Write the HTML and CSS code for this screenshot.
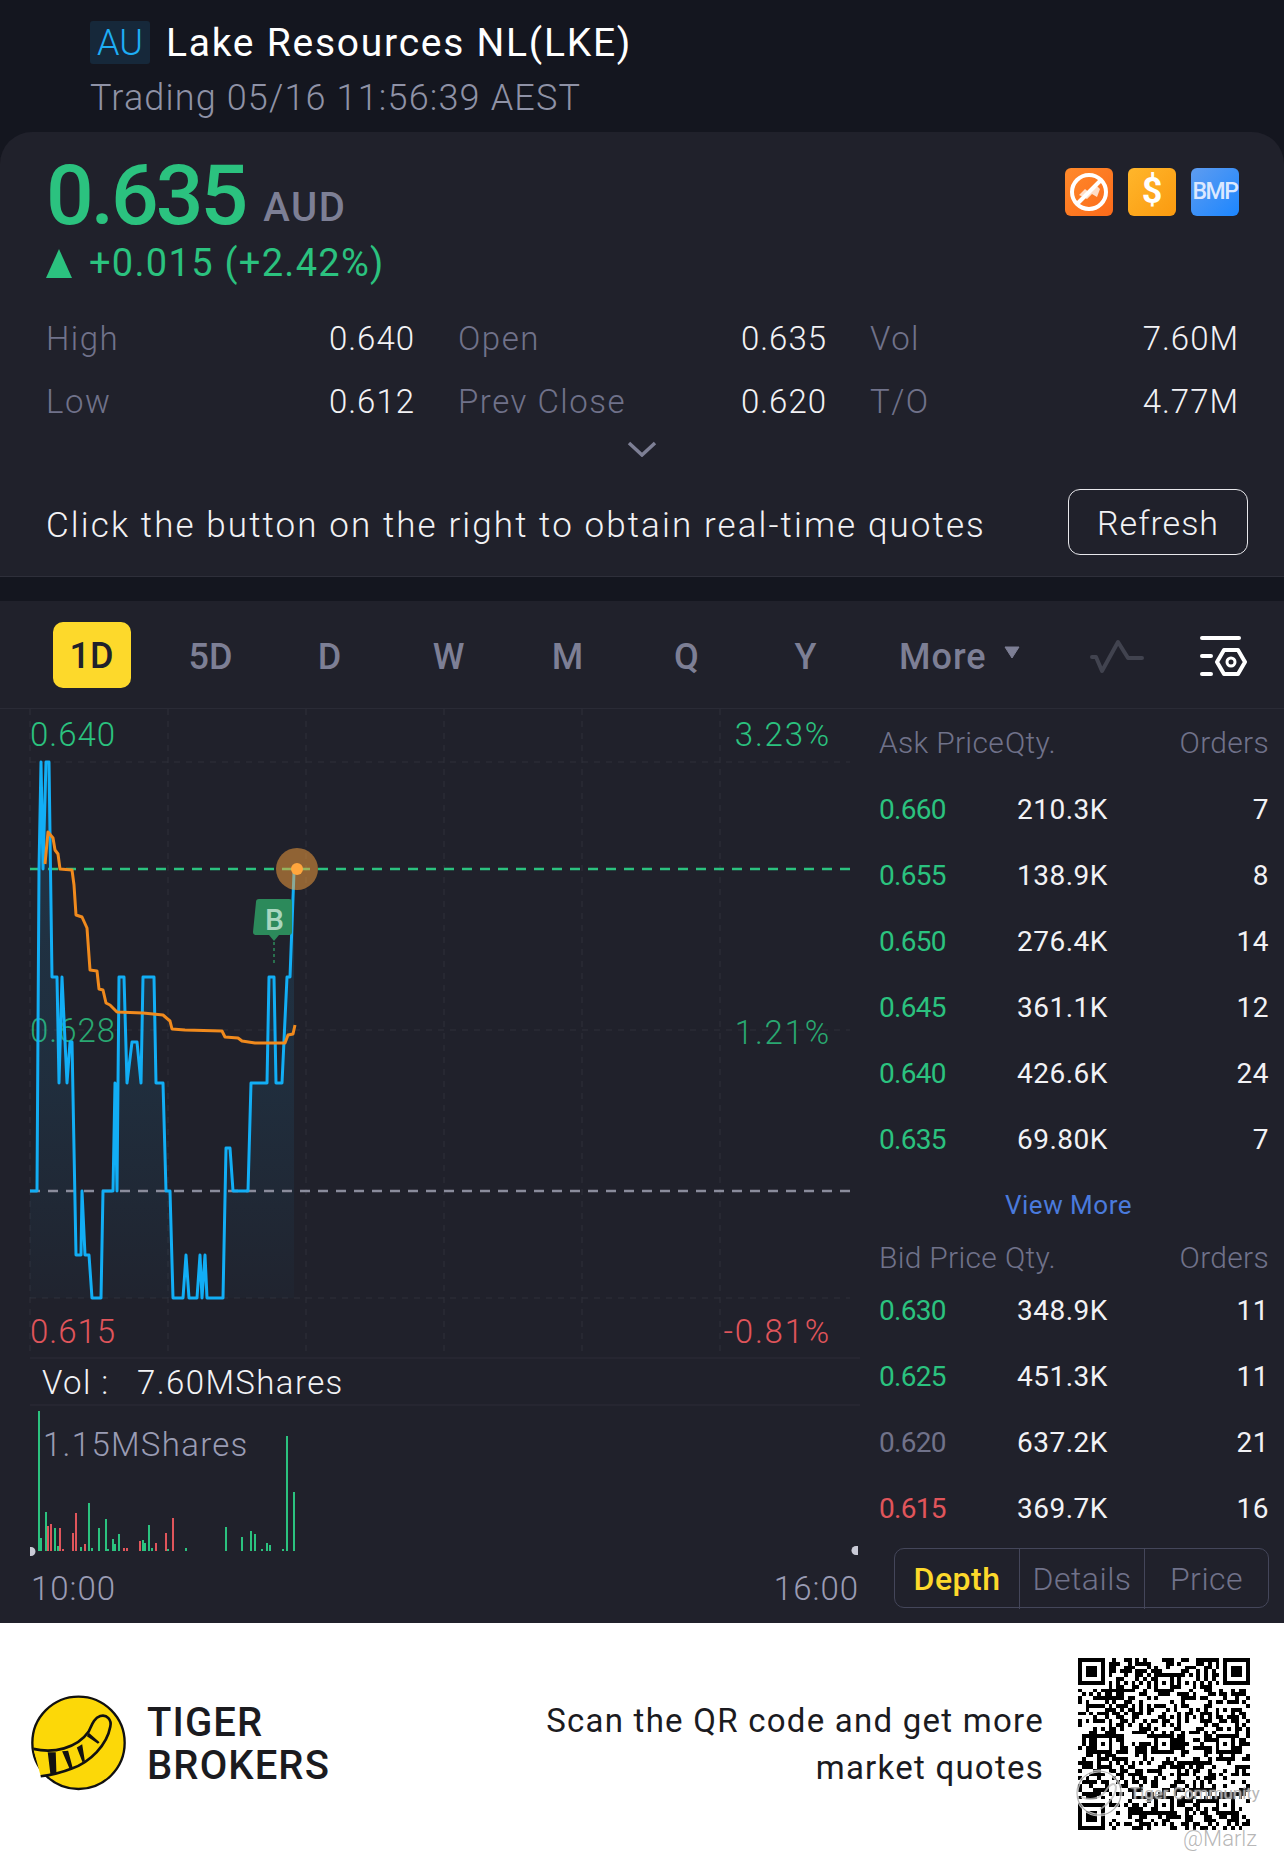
FILE: index.html
```html
<!DOCTYPE html>
<html lang="en">
<head>
    <meta charset="UTF-8">
    <meta name="viewport" content="width=device-width, initial-scale=1.0">
    <title>Lake Resources NL(LKE)</title>
    <link rel="stylesheet" href="styles.css">
</head>
<body>
    <header class="top">
        <div class="title-line">
            <span class="market">AU</span>
            <h1>Lake Resources NL(LKE)</h1>
        </div>
        <div class="status">Trading 05/16 11:56:39 AEST</div>
    </header>

    <section class="quote">
        <div class="quote-head">
            <div>
                <div class="price-line">
                    <span class="price">0.635</span>
                    <span class="currency">AUD</span>
                </div>
                <div class="change">
                    <span class="arrow"></span>
                    <span>+0.015 (+2.42%)</span>
                </div>
            </div>
            <div class="badges">
                <span class="badge badge-orange">
                    <svg viewBox="0 0 48 48" width="48" height="48">
                        <path d="M14 27l6-6 5 4 7-7 3 3-3 8-5-3-5 5z" fill="#fff" opacity=".75"/>
                        <circle cx="24" cy="24" r="17" fill="none" stroke="#fff" stroke-width="4"/>
                        <path d="M12 36L36 12" stroke="#fff" stroke-width="4"/>
                    </svg>
                </span>
                <span class="badge badge-gold">$</span>
                <span class="badge badge-blue">BMP</span>
            </div>
        </div>
        <div class="stats">
            <div class="stat"><span>High</span><b>0.640</b></div>
            <div class="stat"><span>Open</span><b>0.635</b></div>
            <div class="stat"><span>Vol</span><b>7.60M</b></div>
            <div class="stat"><span>Low</span><b>0.612</b></div>
            <div class="stat"><span>Prev Close</span><b>0.620</b></div>
            <div class="stat"><span>T/O</span><b>4.77M</b></div>
        </div>
        <div class="expand">
            <svg viewBox="0 0 30 16" width="30" height="16">
                <path d="M2 2l13 12L28 2" fill="none" stroke="#7d7f95" stroke-width="3.5"/>
            </svg>
        </div>
        <div class="notice">
            <span class="notice-text">Click the button on the right to obtain real-time quotes</span>
            <button class="refresh">Refresh</button>
        </div>
    </section>

    <section class="panel">
        <nav class="toolbar">
            <span class="tab active"><i>1D</i></span>
            <span class="tab"><i>5D</i></span>
            <span class="tab"><i>D</i></span>
            <span class="tab"><i>W</i></span>
            <span class="tab"><i>M</i></span>
            <span class="tab"><i>Q</i></span>
            <span class="tab"><i>Y</i></span>
            <span class="more">More</span>
            <svg class="more-arrow" viewBox="0 0 16 13" width="16" height="13">
                <path d="M1 1h14L8 12z" fill="#7d7f95" stroke="#7d7f95" stroke-linejoin="round"/>
            </svg>
            <svg class="pulse" viewBox="0 0 54 36" width="54" height="36">
                <path d="M2 19h4l6 14L28 4l10 16h14" fill="none" stroke="#41434f" stroke-width="4" stroke-linejoin="round" stroke-linecap="round"/>
            </svg>
            <svg class="settings" viewBox="0 0 48 46" width="48" height="46">
                <path d="M3 6h37M3 24h9M3 42h9" stroke="#fff" stroke-width="4" stroke-linecap="round"/>
                <path d="M18 30l7-12h14l7 12-7 12H25z" fill="none" stroke="#fff" stroke-width="4" stroke-linejoin="round"/>
                <circle cx="32" cy="30" r="4" fill="none" stroke="#fff" stroke-width="3"/>
            </svg>
        </nav>

        <div class="market-body">
            <svg class="chart" viewBox="0 708 860 914" width="860" height="914">
                <defs>
                    <linearGradient id="areaFade" x1="0" y1="0" x2="0" y2="1">
                        <stop offset="0" stop-color="#1eaef5" stop-opacity=".14"/>
                        <stop offset=".6" stop-color="#1eaef5" stop-opacity=".09"/>
                        <stop offset="1" stop-color="#1eaef5" stop-opacity=".02"/>
                    </linearGradient>
                </defs>
                <g class="grid">
                    <path d="M30 761H850M30 1029H850M30 1297H850M30 708V1356M168 708V1356M306 708V1356M444 708V1356M582 708V1356M720 708V1356"/>
                </g>
                <text class="axis up" x="30" y="745">0.640</text>
                <text class="axis pct up" x="831" y="745" text-anchor="end">3.23%</text>
                <text class="axis up dim" x="30" y="1041">0.628</text>
                <text class="axis pct up dim" x="831" y="1043" text-anchor="end">1.21%</text>
                <text class="axis down" x="30" y="1342">0.615</text>
                <text class="axis pct down" x="831" y="1342" text-anchor="end">-0.81%</text>

                <path class="area" d="M30 1190H37L39 868 41 761 43 868 46 761H49L52 976H57L59 1082 62 976 67 1082 70 1041H72L76 1254H81L82 1190 85 1254H89L92 1297H101L103 1190H113L115 1082 117 1190 119 976H124L127 1082 132 1041H137L141 1082 143 976H154L156 1082H163L166 1190H170L173 1297H183L186 1254 189 1297H197L200 1254 202 1297 205 1254 207 1297H223L226 1147H230L233 1190H248L251 1082H267L269 976H274L276 1082H282L287 976H290L294 871V1297H30Z"/>
                <path class="ref-line last" d="M30 868H850"/>
                <path class="ref-line prev" d="M30 1190H850"/>
                <path class="line-price" d="M30 1190H37L39 868 41 761 43 868 46 761H49L52 976H57L59 1082 62 976 67 1082 70 1041H72L76 1254H81L82 1190 85 1254H89L92 1297H101L103 1190H113L115 1082 117 1190 119 976H124L127 1082 132 1041H137L141 1082 143 976H154L156 1082H163L166 1190H170L173 1297H183L186 1254 189 1297H197L200 1254 202 1297 205 1254 207 1297H223L226 1147H230L233 1190H248L251 1082H267L269 976H274L276 1082H282L287 976H290L294 871"/>
                <path class="line-avg" d="M45 863L48 831 53 837 55 849 58 853 60 868 72 869 74 884 76 914 82 916 87 927 90 969 97 970 99 988 103 989 106 1002 110 1004 117 1011 143 1012 163 1014 170 1020 172 1028 185 1029 222 1030 225 1036 238 1037 242 1040 255 1042 285 1042 288 1034 293 1033 295 1024"/>

                <path d="M274 935V962" class="tag-stem"/>
                <path d="M256 901a3 3 0 0 1 3-3h30a3 3 0 0 1 3 3v30a3 3 0 0 1-3 3h-10l-5 6-5-6h-13a3 3 0 0 1-3-3z" fill="#2c8a5b"/>
                <text class="tag-text" x="274.500" y="929" text-anchor="middle">B</text>
                <circle cx="297" cy="868" r="21" fill="#ffa63d" fill-opacity=".5"/>
                <circle cx="297" cy="868" r="6" fill="#ffa63d"/>

                <path class="vol-up" d="M39 1410V1550M41 1537V1550M46 1511V1550M55 1527V1550M58 1545V1550M81 1546V1550M89 1502V1550M92 1547V1550M99 1527V1550M106 1518V1550M108 1548V1550M113 1538V1550M115 1543V1550M119 1533V1550M143 1539V1550M145 1542V1550M149 1524V1550M152 1547V1550M168 1548V1550M186 1547V1550M226 1526V1550M242 1536V1550M251 1530V1550M255 1533V1550M262 1548V1550M267 1542V1550M270 1544V1550M283 1548V1550M287 1435V1550M294 1491V1550"/>
                <path class="vol-down" d="M48 1525V1550M51 1523V1550M60 1527V1550M63 1548V1550M73 1532V1550M76 1512V1550M85 1543V1550M124 1547V1550M127 1547V1550M140 1540V1550M156 1542V1550M166 1532V1550M173 1517V1550"/>
                <path d="M30 1546h1a4.500 4.500 0 0 1 0 9h-1z" fill="#c9cad6"/>
                <path d="M858 1545h-2a4.500 4.500 0 0 0 0 9h2z" fill="#c9cad6"/>

                <path class="rule" d="M30 1357H860M30 1404H860"/>
                <text class="vol-total" x="42" y="1393">Vol :</text>
                <text class="vol-total" x="137" y="1393">7.60MShares</text>
                <text class="axis muted wide" x="43" y="1455">1.15MShares</text>
                <text class="axis muted" x="31" y="1599">10:00</text>
                <text class="axis muted" x="859" y="1599" text-anchor="end">16:00</text>
            </svg>

            <div class="book">
                <div class="book-head ask-head"><span>Ask Price</span><span>Qty.</span><span>Orders</span></div>
                <div class="book-row"><span class="up">0.660</span><span>210.3K</span><span>7</span></div>
                <div class="book-row"><span class="up">0.655</span><span>138.9K</span><span>8</span></div>
                <div class="book-row"><span class="up">0.650</span><span>276.4K</span><span>14</span></div>
                <div class="book-row"><span class="up">0.645</span><span>361.1K</span><span>12</span></div>
                <div class="book-row"><span class="up">0.640</span><span>426.6K</span><span>24</span></div>
                <div class="book-row"><span class="up">0.635</span><span>69.80K</span><span>7</span></div>
                <div class="view-more">View More</div>
                <div class="book-head bid-head"><span>Bid Price</span><span>Qty.</span><span>Orders</span></div>
                <div class="book-row"><span class="up">0.630</span><span>348.9K</span><span>11</span></div>
                <div class="book-row"><span class="up">0.625</span><span>451.3K</span><span>11</span></div>
                <div class="book-row"><span class="flat">0.620</span><span>637.2K</span><span>21</span></div>
                <div class="book-row"><span class="down">0.615</span><span>369.7K</span><span>16</span></div>
                <div class="book-tabs">
                    <span class="active">Depth</span>
                    <span>Details</span>
                    <span>Price</span>
                </div>
            </div>
        </div>
    </section>

    <footer class="footer">
        <div class="brand">
            <svg viewBox="90 75 290 290" width="97" height="97">
                <circle cx="235" cy="218" r="138" fill="#fcd808" stroke="#111" stroke-width="7"/>
                <path d="M100 236C160 250 230 235 265 185 275 165 280 145 300 138 320 132 335 150 330 170 320 225 270 275 215 295 185 307 150 315 122 318" fill="#fcd808" stroke="#111" stroke-width="8"/>
                <path d="M143 246l24 0 2 62-18 4zM186 243l18-1 14 52-9 3zM230 232l16-10 8 50-7 4zM260 198l6-10 32 28-5 5z" fill="#111"/>
            </svg>
            <div class="brand-name">TIGER<br>BROKERS</div>
        </div>
        <div class="promo">Scan the QR code and get more<br>market quotes</div>
        <div class="qr-wrap">
            <svg id="qr" class="qr" viewBox="0 0 45 45" width="172" height="172" shape-rendering="crispEdges"></svg>
            <svg class="seal" viewBox="0 0 48 48" width="48" height="48">
                <circle cx="24" cy="24" r="22" fill="none" stroke="#fff" stroke-width="3"/>
                <circle cx="24" cy="24" r="22" fill="none" stroke="#999" stroke-width="1.200"/>
                <path d="M6 28c10 4 20 2 26-8 3-5 8-7 9-2 0 8-8 18-16 22" fill="none" stroke="#bbb" stroke-width="2"/>
            </svg>
            <span class="mark mark-tiger">Tiger Community</span>
            <span class="mark mark-user">@Marlz</span>
        </div>
    </footer>
    <script src="qr.js"></script>
</body>
</html>
```

FILE: styles.css
```css
* {
    box-sizing: border-box;
}

body {
    font-family: Roboto, "Liberation Sans", sans-serif;
    background-color: #14161f;
    color: #fff;
    margin: 0;
    padding: 0;
    width: 1284px;
    height: 1863px;
    overflow: hidden;
}

.top {
    height: 132px;
    padding: 21px 0 0 90px;
}

.title-line {
    display: flex;
    align-items: center;
    height: 43px;
}

.market {
    width: 60px;
    height: 43px;
    background-color: #16283a;
    color: #1eaef5;
    border-radius: 3px;
    font-size: 36px;
    font-weight: 300;
    line-height: 45px;
    text-align: center;
}

h1 {
    margin: 0 0 0 16px;
    font-size: 39px;
    font-weight: 400;
    letter-spacing: 1.750px;
}

.status {
    margin-top: 11px;
    color: #8f92a6;
    font-size: 36px;
    font-weight: 300;
    letter-spacing: 1.150px;
    line-height: 46px;
}

.quote {
    height: 445px;
    padding: 0 46px;
    background-color: #20212b;
    border-radius: 32px 32px 0 0;
    border-bottom: 1px solid #2e2f3a;
}

.quote-head {
    display: flex;
    justify-content: space-between;
    height: 175px;
}

.price-line {
    display: flex;
    height: 100px;
    padding-top: 8px;
    line-height: 112px;
}

.price {
    color: #2bc27f;
    font-size: 84px;
    font-weight: 500;
    letter-spacing: -3px;
}

.currency {
    margin: 48px 0 0 18px;
    color: #7d7f95;
    font-size: 40px;
    font-weight: 500;
    letter-spacing: 1.500px;
    line-height: 40px;
}

.change {
    display: flex;
    align-items: center;
    margin-top: 5px;
    color: #2bc27f;
    font-size: 38px;
    letter-spacing: 1.300px;
    line-height: 52px;
}

.arrow {
    width: 0;
    height: 0;
    margin-right: 17px;
    border-left: 13px solid transparent;
    border-right: 13px solid transparent;
    border-bottom: 29px solid #2bc27f;
}

.badges {
    display: flex;
    gap: 15px;
    margin: 36px -1px 0 0;
}

.badge {
    display: block;
    width: 48px;
    height: 48px;
    border-radius: 6px;
    text-align: center;
    color: #fff;
}

.badge-orange {
    background: linear-gradient(135deg, #ff8a2b, #fb6a1a);
}

.badge-gold {
    background: linear-gradient(135deg, #ffb62b, #fb9a0f);
    font-size: 36px;
    font-weight: 700;
    line-height: 46px;
}

.badge-blue {
    background: linear-gradient(135deg, #5e9cf0, #1c86ff);
    color: #dbe8ff;
    font-size: 23px;
    font-weight: 500;
    letter-spacing: -1.500px;
    line-height: 48px;
}

.stats {
    display: grid;
    grid-template-columns: repeat(3, 368px);
    column-gap: 44px;
    grid-auto-rows: 63px;
    height: 126px;
}

.stat {
    display: flex;
    justify-content: space-between;
    align-items: center;
    font-size: 33px;
    font-weight: 300;
    letter-spacing: 1px;
}

.stat span {
    color: #70728a;
    letter-spacing: 1.500px;
}

.stat b {
    margin-right: -1px;
    font-weight: 300;
    color: #f2f2f5;
}

.expand {
    display: flex;
    justify-content: center;
    height: 20px;
    margin-top: 8px;
}

.notice {
    display: flex;
    justify-content: space-between;
    align-items: center;
    margin-top: 28px;
    margin-right: -10px;
    font-size: 35px;
    font-weight: 300;
    letter-spacing: 2.100px;
    color: #f2f2f5;
}

.notice-text {
    margin-top: 7px;
}

.refresh {
    width: 180px;
    height: 66px;
    padding-top: 3px;
    background: none;
    border: 1.500px solid #e8e8ec;
    border-radius: 12px;
    color: #f2f2f5;
    font-family: inherit;
    font-size: 34px;
    font-weight: 300;
    letter-spacing: 1px;
}

.panel {
    margin-top: 24px;
    height: 1022px;
    background-color: #20212b;
}

.toolbar {
    display: flex;
    align-items: center;
    height: 108px;
    padding-left: 32px;
    border-bottom: 1px solid #2a2b36;
}

.tab {
    display: flex;
    justify-content: center;
    width: 119px;
    color: #7d7f95;
    font-size: 36px;
    font-weight: 500;
}

.tab i {
    padding-top: 4px;
    font-style: normal;
}

.tab.active i {
    width: 78px;
    height: 66px;
    padding-top: 0;
    background-color: #fdd92b;
    border-radius: 10px;
    color: #20212b;
    line-height: 69px;
    text-align: center;
}

.more {
    margin-left: 34px;
    padding-top: 4px;
    color: #7d7f95;
    font-size: 36px;
    font-weight: 500;
    letter-spacing: 1px;
}

.more-arrow {
    margin: -4px 0 0 17px;
}

.pulse {
    margin: 3px 0 0 70px;
}

.settings {
    margin-left: 55px;
}

.market-body {
    display: flex;
    height: 914px;
}

.chart {
    flex: none;
    display: block;
}

.grid path {
    fill: none;
    stroke: #2f303b;
    stroke-width: 1;
    stroke-dasharray: 6 6;
}

.axis {
    font-size: 33px;
    font-weight: 300;
    letter-spacing: 1px;
}

.axis.pct {
    letter-spacing: 1.800px;
}

.axis.wide {
    letter-spacing: 1.300px;
}

.axis.up {
    fill: #2bc27f;
}

.axis.dim {
    fill-opacity: .85;
}

.axis.down {
    fill: #e0555b;
}

.axis.muted {
    fill: #9a9cb4;
}

.area {
    fill: url(#areaFade);
}

.ref-line {
    fill: none;
    stroke-width: 2.500;
    stroke-dasharray: 10 8;
}

.ref-line.last {
    stroke: #2bc27f;
}

.ref-line.prev {
    stroke: #8a8c9c;
}

.line-price {
    fill: none;
    stroke: #12aef5;
    stroke-width: 3;
    stroke-linejoin: round;
}

.line-avg {
    fill: none;
    stroke: #f08a1d;
    stroke-width: 3;
    stroke-linejoin: round;
}

.tag-stem {
    stroke: #2c8a5b;
    stroke-width: 1.500;
    stroke-dasharray: 3 3;
}

.tag-text {
    fill: #a9d6bf;
    font-size: 30px;
    font-weight: 500;
}

.vol-up,
.vol-down {
    fill: none;
    stroke-width: 2;
}

.vol-up {
    stroke: #2bc27f;
}

.vol-down {
    stroke: #e0555b;
}

.rule {
    fill: none;
    stroke: #2c2d38;
    stroke-width: 1;
}

.vol-total {
    fill: #f2f2f5;
    font-size: 33px;
    font-weight: 300;
    letter-spacing: 1.400px;
}

.book {
    flex: 1;
    padding: 0 15px 0 19px;
}

.book-head,
.book-row {
    display: grid;
    align-items: center;
}

.book-head {
    grid-template-columns: 126px 1fr auto;
    color: #70728a;
    font-size: 30px;
    font-weight: 300;
    letter-spacing: .3px;
    white-space: nowrap;
}

.ask-head {
    height: 67px;
}

.bid-head {
    height: 39px;
}

.book-row {
    grid-template-columns: 138px 1fr auto;
    height: 66px;
    color: #f2f2f5;
    font-size: 28px;
    letter-spacing: .5px;
}

.book-row .up,
.book-row .flat,
.book-row .down {
    letter-spacing: -.7px;
}

.book-row .up {
    color: #2bc27f;
}

.book-row .flat {
    color: #70728a;
}

.book-row .down {
    color: #e0555b;
}

.view-more {
    height: 66px;
    padding-right: 11px;
    color: #4a7adc;
    font-size: 26px;
    letter-spacing: .5px;
    line-height: 66px;
    text-align: center;
}

.book-tabs {
    display: grid;
    grid-template-columns: 124px 125px 1fr;
    height: 60px;
    margin: 7px 0 0 15px;
    border: 1px solid #44465a;
    border-radius: 10px;
    color: #70728a;
    font-size: 32px;
    font-weight: 300;
    letter-spacing: .5px;
    line-height: 60px;
    text-align: center;
}

.book-tabs span + span {
    border-left: 1px solid #44465a;
}

.book-tabs .active {
    color: #fdd92b;
    font-weight: 500;
}

.footer {
    display: flex;
    align-items: center;
    height: 241px;
    padding-left: 30px;
    background-color: #fff;
    color: #1b1b1f;
}

.brand {
    display: flex;
    align-items: center;
    gap: 20px;
}

.brand-name {
    font-size: 40px;
    font-weight: 500;
    letter-spacing: 1.100px;
    line-height: 43px;
}

.promo {
    flex: 1;
    padding-right: 34px;
    font-size: 33px;
    font-weight: 400;
    letter-spacing: 1.250px;
    line-height: 47px;
    text-align: right;
}

.qr-wrap {
    position: relative;
    width: 172px;
    height: 172px;
    margin-right: 34px;
}

.qr {
    display: block;
}

.seal {
    position: absolute;
    left: -3px;
    top: 111px;
    opacity: .75;
}

.mark {
    position: absolute;
    color: rgba(170, 170, 170, .85);
    text-shadow: 0 0 2px #fff;
    white-space: nowrap;
}

.mark-tiger {
    left: 52px;
    top: 125px;
    font-size: 17px;
}

.mark-user {
    left: 105px;
    top: 168px;
    font-size: 22px;
    font-weight: 300;
}
```

FILE: qr.js
```js
// draws the 45 module QR block: fixed patterns plus filler modules
const size = 45;
const svg = document.getElementById('qr');
let seed = 20517;

function nextBit() {
    seed = (seed * 1103515245 + 12345) % 2147483648;
    return (seed >> 16) % 100 < 48;
}

function inFinder(r, c) {
    return (r < 8 || r >= size - 8) && c < 8 || r < 8 && c >= size - 8;
}

function finderBit(r, c) {
    const y = r >= size - 8 ? r - (size - 7) : r;
    const x = c >= size - 8 ? c - (size - 7) : c;
    if (x < 0 || y < 0 || x > 6 || y > 6) return false;
    if (x === 0 || y === 0 || x === 6 || y === 6) return true;
    return x >= 2 && x <= 4 && y >= 2 && y <= 4;
}

const centers = [6, 22, 38];

function alignBit(r, c) {
    for (const cy of centers) {
        for (const cx of centers) {
            if ((cy === 6 && cx === 6) || (cy === 6 && cx === 38) || (cy === 38 && cx === 6)) continue;
            const d = Math.max(Math.abs(r - cy), Math.abs(c - cx));
            if (d <= 2) return d !== 1;
        }
    }
    return null;
}

let d = '';
for (let r = 0; r < size; r++) {
    for (let c = 0; c < size; c++) {
        let on;
        const align = alignBit(r, c);
        if (inFinder(r, c)) on = finderBit(r, c);
        else if (align !== null) on = align;
        else if (r === 6) on = c % 2 === 0;
        else if (c === 6) on = r % 2 === 0;
        else on = nextBit();
        if (on) d += `M${c} ${r}h1v1h-1z`;
    }
}

const path = document.createElementNS('http://www.w3.org/2000/svg', 'path');
path.setAttribute('d', d);
svg.appendChild(path);
```
